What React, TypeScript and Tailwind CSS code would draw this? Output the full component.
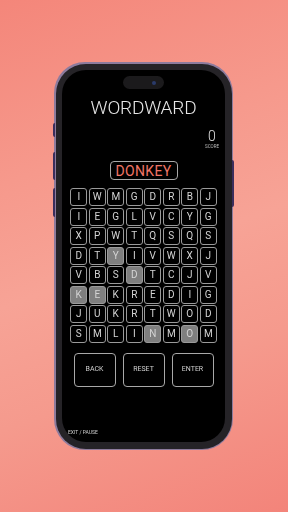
import React from "react";

const rows = [
  "IWMGDRBJ",
  "IEGLVCYG",
  "XPWTQSQS",
  "DTYIVWXJ",
  "VBSDTCJV",
  "KEKREDIG",
  "JUKRTWOD",
  "SMLINMOM",
];
const hl = new Set(["3-2", "4-3", "5-0", "5-1", "7-4", "7-6"]);

export default function App() {
  return (
    <div
      className="w-[288px] h-[512px] overflow-hidden relative"
      style={{
        background:
          "linear-gradient(160deg, #f4867a 0%, #f6998c 30%, #f7a396 50%, #f59a8d 70%, #f3847a 100%)",
        fontFamily: "Roboto, 'Noto Sans', sans-serif",
      }}
    >
      <div className="absolute left-[54px] top-[62px] w-[179px] h-[388px]">
        {/* side buttons */}
        <div className="absolute left-[-1px] top-[61px] w-[2px] h-[14px] bg-[#3b2e5c] rounded-l" />
        <div className="absolute left-[-1px] top-[90px] w-[2px] h-[28px] bg-[#3b2e5c] rounded-l" />
        <div className="absolute left-[-1px] top-[126px] w-[2px] h-[29px] bg-[#3b2e5c] rounded-l" />
        <div className="absolute right-[-1px] top-[98px] w-[2px] h-[47px] bg-[#3b2e5c] rounded-r" />
        <div className="w-full h-full rounded-[31px] bg-[#8d7b9d] p-[1.5px]">
          <div className="w-full h-full rounded-[30px] bg-[#252327] p-[6.5px]">
            <div className="w-full h-full rounded-[24px] bg-black flex flex-col items-center relative">
              <div className="mt-[6px] w-[41px] h-[13px] rounded-full bg-[#1b1a1c] relative">
                <div className="absolute right-[8px] top-[4.5px] w-[4px] h-[4px] rounded-full bg-[#2a3a6a]" />
              </div>
              <div className="mt-[9px] text-[19px] leading-[20px] font-light text-[#e6e6e6] tracking-[-0.2px] grayscale">
                WORDWARD
              </div>
              <div className="mt-[12px] w-full flex justify-end pr-[6px] grayscale">
                <div className="flex flex-col items-center">
                  <div className="text-[14px] leading-[13px] font-light text-[#e0e0e0]">0</div>
                  <div className="text-[4.5px] leading-[5px] text-[#bbbbbb] mt-[1px]">SCORE</div>
                </div>
              </div>
              <div className="mt-[12px] w-[68px] h-[19px] rounded-[4px] border border-[#a8a8a8] flex items-center justify-center text-[14px] leading-none text-[#f07566] tracking-[0.3px]">
                DONKEY
              </div>
              <div className="mt-[8px] grid grid-cols-8 gap-x-[1.5px] gap-y-[1.5px] grayscale">
                {rows.map((r, ri) =>
                  r.split("").map((ch, ci) => (
                    <div
                      key={ri + "-" + ci}
                      className={
                        "w-[17px] h-[18px] rounded-[3px] border border-[#9a9a9a] flex items-center justify-center text-[10px] leading-none text-[#d4d4d4] " +
                        (hl.has(ri + "-" + ci) ? "bg-[#7f7f7f]" : "bg-black")
                      }
                    >
                      {ch}
                    </div>
                  ))
                )}
              </div>
              <div className="mt-[10px] flex gap-[7px] grayscale">
                {["BACK", "RESET", "ENTER"].map((t) => (
                  <div
                    key={t}
                    className="w-[42px] h-[34px] rounded-[4px] border border-[#a8a8a8] flex items-center justify-center text-[7px] leading-none text-[#d0d0d0]"
                  >
                    {t}
                  </div>
                ))}
              </div>
              <div className="absolute left-[6px] bottom-[7px] text-[5px] leading-none text-[#cfcfcf] grayscale">
                EXIT / PAUSE
              </div>
            </div>
          </div>
        </div>
      </div>
    </div>
  );
}
